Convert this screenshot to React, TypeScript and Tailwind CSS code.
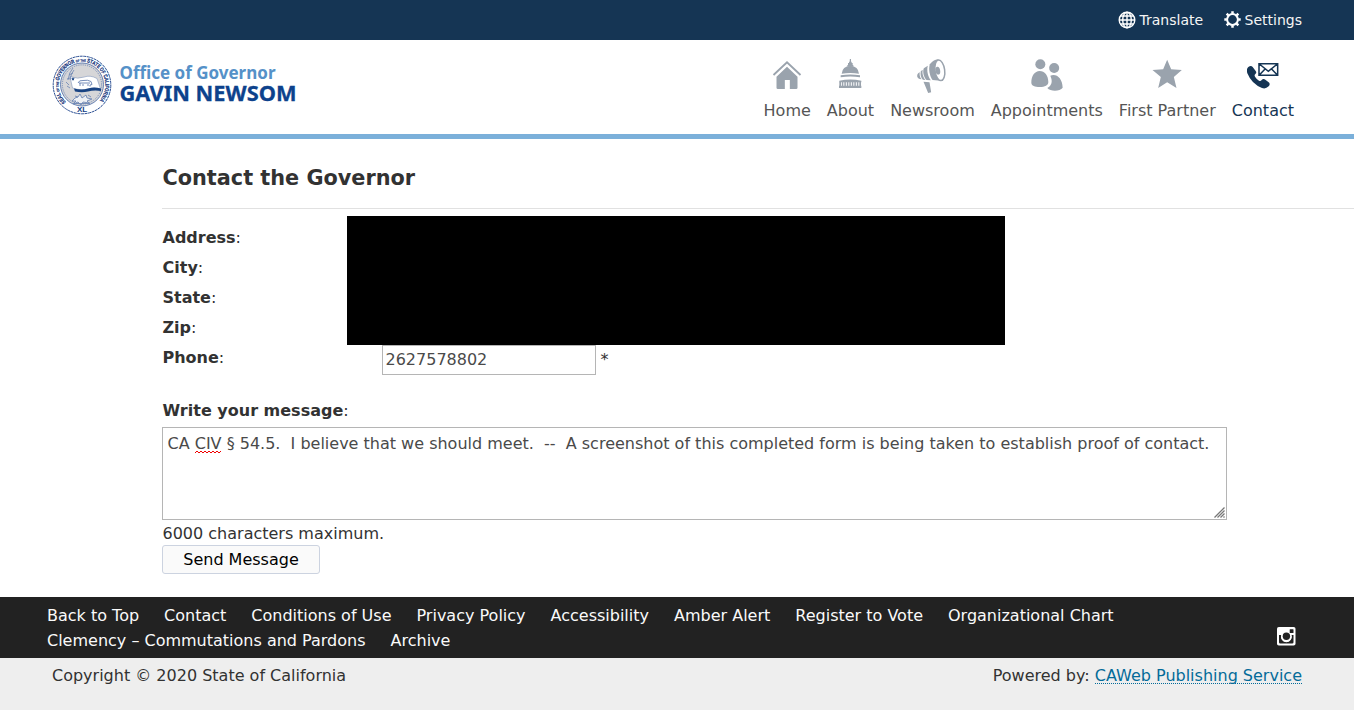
import type { ReactNode } from "react";

const NAV_ICON = "block h-10 w-8";

const HomeIcon = (
  <svg viewBox="63.5 15 96 120" className={NAV_ICON} fill="currentColor">
    <path d="M71 75 111.500 37 152 75" fill="none" stroke="currentColor" strokeWidth="5.500" />
    <path d="M111.500 50 143 80V113q0 4-4 4H120V90H105V117H84q-4 0-4-4V80Z" />
  </svg>
);

const CapitolIcon = (
  <svg viewBox="252 15 96 120" className={NAV_ICON} fill="currentColor">
    <path d="M299.500 27h3.500v8h2v4h3v6h2v5h-18v-5h2v-6h3v-4h2Z" />
    <path d="M275 71q2-22 26-23 24 1 26 23-26-4-52 0Z" />
    <path d="M272 76q29-5 58 0v6q-29-5-58 0ZM268 92q33-7 66 0v5h-66ZM267 107h67v7h-67Z" />
    <path d="M268 95h5v14h-5zM275.500 95h4.500v14h-4.500zM283 95h4.500v14h-4.500zM290.500 95h4.500v14h-4.500zM298 95h4.500v14h-4.500zM305.500 95h4.500v14h-4.500zM313 95h4.500v14h-4.500zM320.500 95h4.500v14h-4.500zM328 95h5v14h-5z" />
  </svg>
);

const MegaphoneIcon = (
  <svg viewBox="499.5 15 96 120" className={NAV_ICON} fill="currentColor">
    <path d="M566 28c-14 2-20 9-25 15-5 16 0 36 8 47l32 3Z" />
    <ellipse cx="571" cy="61" rx="14.500" ry="31" transform="rotate(-8 571 61)" fill="#fff" stroke="currentColor" strokeWidth="4.500" />
    <ellipse cx="565" cy="62" rx="7" ry="12" transform="rotate(-10 565 62)" />
    <path d="M535 47c-4 14 0 32 9 44l-13-1c-9-9-12-25-8-35ZM520 60c-3 9 1 22 8 30l-8-1c-6-5-8-15-6-26ZM511 67c-2 7 0 15 5 21-8-1-14-5-13-11 0-5 4-8 8-10ZM522 95l18 2 5 30-9 2Z" />
  </svg>
);

const PeopleIcon = (
  <svg viewBox="32 15 96 120" className={NAV_ICON} fill="currentColor" overflow="visible">
    <circle cx="60" cy="42.500" r="15" />
    <circle cx="101.500" cy="54" r="15" />
    <path d="M33 98c0-20 10-35 25-35s26 14 26 33c0 10-10 15-26 15-14 0-25-4-25-13ZM90 77c19-7 36 8 37 36-8 12-37 12-46 1 13-8 17-19 9-37Z" />
  </svg>
);

const StarIcon = (
  <svg viewBox="393.5 15 96 120" className={NAV_ICON} fill="currentColor">
    <path d="m442 29 12 29 32 2-24 21 8 33-28-17-27 17 8-33-25-21 32-2Z" />
  </svg>
);

const ContactIcon = (
  <svg viewBox="681 15 96 120" className={NAV_ICON} fill="currentColor">
    <path d="M685 51q8-6 13 0l9 12q4 6-1 9-4 3-1 8 5 8 12 12 5 2 8-2 5-5 11-1l10 8q6 5 0 12-9 9-20 5-31-12-44-44-4-12 3-19Z" />
    <path d="M717 41h56v35h-56ZM718 42l27 22 27-22M718 75l18-19M772 75l-18-19" fill="none" stroke="currentColor" strokeWidth="4.600" />
  </svg>
);

const NAV: { label: string; icon: ReactNode; active?: boolean }[] = [
  { label: "Home", icon: HomeIcon },
  { label: "About", icon: CapitolIcon },
  { label: "Newsroom", icon: MegaphoneIcon },
  { label: "Appointments", icon: PeopleIcon },
  { label: "First Partner", icon: StarIcon },
  { label: "Contact", icon: ContactIcon, active: true },
];

const FOOTER_LINKS = [
  "Back to Top",
  "Contact",
  "Conditions of Use",
  "Privacy Policy",
  "Accessibility",
  "Amber Alert",
  "Register to Vote",
  "Organizational Chart",
  "Clemency – Commutations and Pardons",
  "Archive",
];

function Seal() {
  return (
    <svg viewBox="0 0 60 60" className="block size-[60px]" fill="none">
      <circle cx="30" cy="30" r="28.800" fill="#fff" stroke="#2b4f93" strokeWidth="1" strokeDasharray="3 .6" />
      <circle cx="30" cy="29.500" r="21.500" fill="#d6d6d8" stroke="#4667a3" strokeWidth=".8" />
      <circle cx="30" cy="29.500" r="19.600" stroke="#7189b5" strokeWidth=".9" strokeDasharray="1.200 1" />
      <path id="seal-text" d="M14 47A23.300 23.300 0 1 1 46 47" />
      <text fill="#0d2f78" fontFamily="Liberation Sans, sans-serif" fontWeight="700" fontSize="5.600" stroke="#0d2f78" strokeWidth=".2">
        <textPath href="#seal-text" textLength="108" lengthAdjust="spacingAndGlyphs">
          SEAL <tspan fontSize="3.400">OF THE</tspan> GOVERNOR <tspan fontSize="3.400">OF THE</tspan> STATE OF CALIFORNIA
        </textPath>
      </text>
      <path d="M18 21.500q8 3 14 .6t13 1.400l3.500 10.500q-7-2-13 0t-15-1Z" fill="#fff" stroke="#7189b5" strokeWidth=".5" />
      <path d="M22 33.500q8 2 14 0t13 0v2.500q-7-1-13 .5t-13 0Z" fill="#194382" />
      <path d="m21 22 .5 1.300 1.300.1-1 .9.300 1.300-1.100-.7-1.100.7.300-1.300-1-.9 1.300-.1Z" fill="#194382" />
      <path d="M26 28q1-3 5-2.500 5-1 8 1l1 3-2 .5v1.500M28 28v3M31 29v2M36 29v2M27 28h11" stroke="#6680b0" strokeWidth=".9" />
      <path d="M21 13q-4 4-5 12M22 15q-3 3-4 10M17 20l4-2M15 24l3-1M14 27l3 3M15 31l3 2" stroke="#6b84b2" strokeWidth=".8" />
      <path d="M20 46q3-4 6-4l2-3 2 4 4-3 1 3 5 1-5 2 2 2-6-1-2 3-3-3-5 2 3-3ZM21 48.500h17M23 41l3 1M36 40l3 2" stroke="#7189b5" strokeWidth=".9" fill="#eef0f4" />
      <text x="30" y="57" textAnchor="middle" fill="#123c84" fontFamily="Liberation Sans, sans-serif" fontWeight="700" fontSize="8">XL</text>
    </svg>
  );
}

function Wordmark() {
  return (
    <svg viewBox="0 0 178 50" className="block h-[50px] w-[178px]" fontFamily="Noto Sans, sans-serif">
      <text x="-.5" y="23" fontSize="17.800" fontWeight="700" fill="#5591c8" textLength="156" lengthAdjust="spacingAndGlyphs">Office of Governor</text>
      <text x="-.5" y="45" fontSize="22" fontWeight="700" fill="#0d428c" stroke="#0d428c" strokeWidth=".3" textLength="177" lengthAdjust="spacingAndGlyphs">GAVIN NEWSOM</text>
    </svg>
  );
}

function GlobeIcon() {
  return (
    <svg viewBox="0 0 18 18" className="size-[18px]" fill="none" stroke="#fff" strokeWidth="1.400">
      <circle cx="9" cy="9" r="7.800" />
      <ellipse cx="9" cy="9" rx="4.300" ry="7.800" />
      <path d="M9 1v16M1 9h16M2.300 5h13.400M2.300 13h13.400" />
    </svg>
  );
}

function GearIcon() {
  return (
    <svg viewBox="0 0 18 18" className="size-[18px]" fill="none" stroke="#fff">
      <circle cx="9.500" cy="8.500" r="5.400" strokeWidth="2" />
      <path strokeWidth="2.500" d="M9.500 .3v2.500M9.500 14.200v2.500M1.300 8.500h2.500M15.200 8.500h2.500M3.700 2.700l1.600 1.600M13.700 12.700l1.600 1.600M3.700 14.300l1.600-1.600M13.700 4.300l1.600-1.600" />
    </svg>
  );
}

function InstagramIcon() {
  return (
    <svg viewBox="0 0 19 19" className="size-[19px]">
      <rect width="18.500" height="18.500" rx="1.800" fill="#fff" />
      <path d="M2 8h2.400a5.300 5.300 0 1 0 9.900 0H16.500v7.200q0 1.300-1.300 1.300H3.300Q2 16.500 2 15.200Z" fill="#222" />
      <circle cx="9.400" cy="9.300" r="5.300" fill="#fff" />
      <circle cx="9.400" cy="9.300" r="3.700" fill="#222" />
      <rect x="12.700" y="2.300" width="3.800" height="3.800" rx=".5" fill="#222" />
    </svg>
  );
}

export default function App() {
  return (
    <div className="flex h-[710px] w-[1354px] flex-col overflow-hidden bg-white font-['DejaVu_Sans',sans-serif] text-base leading-6 text-[#323232]">
      <div className="flex h-10 shrink-0 items-center justify-end bg-[#153554] pr-[52px] text-sm text-[#f5f5f5]">
        <a className="mr-5 flex items-center gap-1"><GlobeIcon />Translate</a>
        <a className="flex items-center gap-[3.500px]"><GearIcon />Settings</a>
      </div>

      <header className="flex h-[99px] shrink-0 justify-between border-b-[5px] border-[#7bb0da] pr-[52px] pl-[52px]">
        <div className="flex gap-2 pt-[15px]">
          <Seal />
          <div className="pt-px"><Wordmark /></div>
        </div>
        <nav className="flex pt-[15px]">
          {NAV.map(({ label, icon, active }) => (
            <a key={label} className={`flex flex-col items-center px-2 ${active ? "text-[#153554]" : "text-[#9aa3ad]"}`}>
              {icon}
              <span className={`mt-1 ${active ? "" : "text-[#555555]"}`}>{label}</span>
            </a>
          ))}
        </nav>
      </header>

      <main className="flex h-[458px] shrink-0 flex-col pl-[162px]">
        <h1 className="h-[70px] border-b border-[#e1e1e1] pt-6 pl-[0.500px] text-[20.8px] leading-[30px] font-bold">Contact the Governor</h1>
        <div className="mt-[7px] flex">
          <div className="w-[185px] pt-[7px] pl-[0.500px] leading-[30px]">
            {["Address", "City", "State", "Zip", "Phone"].map((label) => (
              <div key={label}><b>{label}</b>:</div>
            ))}
          </div>
          <div>
            <div className="h-[129px] w-[658px] bg-black" />
            <div className="flex pl-[35px]">
              <input defaultValue="2627578802" className="h-[30px] w-[214px] border border-[#b5b5b5] pb-px pl-[2.500px] text-[#4a4a4a] outline-none" />
              <span className="ml-[4.500px] pt-[3px]">*</span>
            </div>
          </div>
        </div>
        <div className="mt-6 pl-[0.500px]"><b>Write your message</b>:</div>
        <div className="relative mt-1 h-[93px] w-[1065px] border border-[#b5b5b5] pt-1 pl-[4.500px] whitespace-pre text-[#4a4a4a]">
          CA <span className="relative">CIV
            <svg viewBox="0 0 28 4" className="absolute bottom-[-1px] left-0 h-1 w-7">
              <path d="M0 3l2-2 2 2 2-2 2 2 2-2 2 2 2-2 2 2 2-2 2 2 2-2 2 2 2-2" fill="none" stroke="#f00000" />
            </svg>
          </span> § 54.5.  I believe that we should meet.  --  A screenshot of this completed form is being taken to establish proof of contact.
          <svg viewBox="0 0 11 11" className="absolute right-px bottom-px size-[11px]">
            <path d="M.5 10.500l10-10M3.500 10.500l7-7M6.500 10.500l4-4M9.500 10.500l1-1" stroke="#777" strokeWidth="1.300" />
          </svg>
        </div>
        <div className="mt-[2px] pl-[0.500px] leading-[23px]">6000 characters maximum.</div>
        <button className="h-[29px] w-[158px] rounded-[3px] border border-[#ccd3e0] bg-[#fafafa] text-black">Send Message</button>
      </main>

      <footer className="flex h-[61px] shrink-0 justify-between bg-[#222] pl-[47px] text-[#fafafa]">
        <div className="flex w-[1100px] flex-wrap content-start gap-x-[25px] pt-[6px] leading-[25px]">
          {FOOTER_LINKS.map((label) => <a key={label}>{label}</a>)}
        </div>
        <div className="pt-[30px] pr-[58px]"><InstagramIcon /></div>
      </footer>
      <div className="flex grow justify-between bg-[#eee] px-[52px] pt-[6px]">
        <span>Copyright © 2020 State of California</span>
        <span>Powered by: <a className="inline-block h-[20px] border-b border-dotted border-[#046b99] text-[#046b99]"><span className="block leading-6">CAWeb Publishing Service</span></a></span>
      </div>
    </div>
  );
}
